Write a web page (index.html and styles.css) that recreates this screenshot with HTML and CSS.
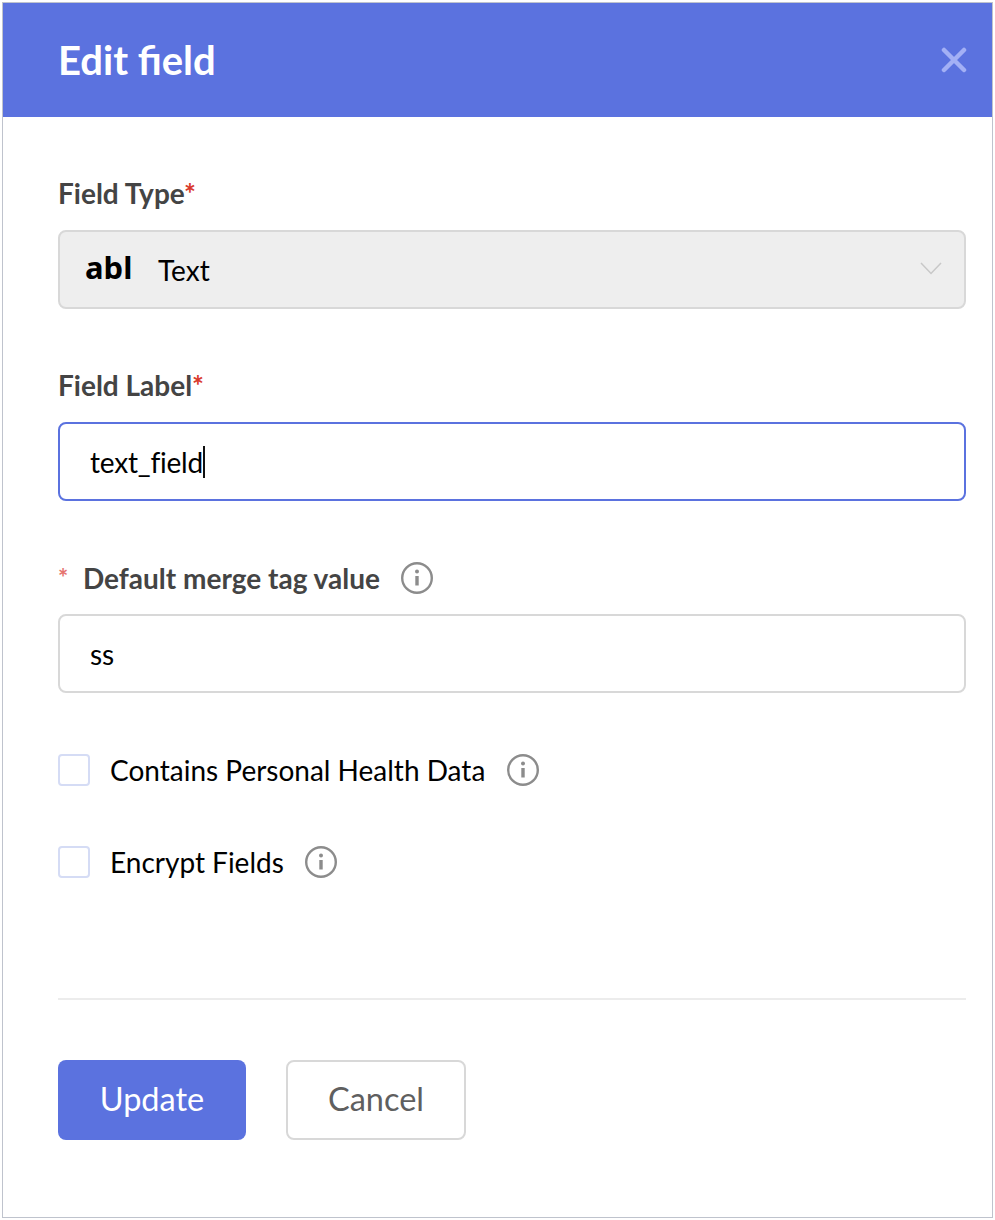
FILE: index.html
```html
<!DOCTYPE html>
<html lang="en">
<head>
    <meta charset="UTF-8">
    <title>Edit field</title>
    <link rel="stylesheet" href="styles.css">
</head>
<body>
    <div class="dialog">
        <div class="dialog-header">
            <h1>Edit field</h1>
            <svg class="close-icon" width="26" height="26" viewBox="0 0 26 26"><path d="M3 3 L23 23 M23 3 L3 23"/></svg>
        </div>
        <div class="dialog-body">
            <label class="field-label">Field Type<span class="req">*</span></label>
            <div class="field-box select-box">
                <span class="type-icon">abl</span>
                <span class="type-name">Text</span>
                <svg class="chevron" width="22" height="13" viewBox="0 0 22 13"><path d="M1 1 L11 11.5 L21 1"/></svg>
            </div>

            <label class="field-label label-gap">Field Label<span class="req">*</span></label>
            <div class="field-box field-focus"><span class="typed">text_field</span><span class="caret"></span></div>

            <div class="field-label label-gap label-row">
                <span class="req-left">*</span>
                <span>Default merge tag value</span>
                <svg class="info-icon info-label" width="32" height="32" viewBox="0 0 32 32"><circle cx="16" cy="16" r="14.8"/><circle class="dot" cx="16" cy="9.6" r="2"/><path d="M16 14 V23.5"/></svg>
            </div>
            <div class="field-box">ss</div>

            <div class="check-row first-check">
                <span class="checkbox"></span>
                <span>Contains Personal Health Data</span>
                <svg class="info-icon" width="32" height="32" viewBox="0 0 32 32"><circle cx="16" cy="16" r="14.8"/><circle class="dot" cx="16" cy="9.6" r="2"/><path d="M16 14 V23.5"/></svg>
            </div>
            <div class="check-row">
                <span class="checkbox"></span>
                <span>Encrypt Fields</span>
                <svg class="info-icon info-short" width="32" height="32" viewBox="0 0 32 32"><circle cx="16" cy="16" r="14.8"/><circle class="dot" cx="16" cy="9.6" r="2"/><path d="M16 14 V23.5"/></svg>
            </div>

            <div class="divider"></div>

            <div class="button-row">
                <button class="btn btn-primary">Update</button>
                <button class="btn btn-cancel">Cancel</button>
            </div>
        </div>
    </div>
</body>
</html>
```

FILE: styles.css
```css
body {
    margin: 0;
    background-color: #fff;
    font-family: Lato, "Liberation Sans", sans-serif;
}
.dialog {
    margin: 2px;
    width: 991px;
    height: 1216px;
    box-sizing: border-box;
    border: 1px solid #bfc3cd;
    background-color: #fff;
}
.dialog-header {
    height: 114px;
    background-color: #5b72df;
    display: flex;
    align-items: center;
    justify-content: space-between;
    padding: 0 25px 0 55px;
}
.dialog-header h1 {
    margin: 0;
    color: #fff;
    font-size: 40px;
    font-weight: 700;
}
.close-icon path {
    fill: none;
    stroke: #a3b0f5;
    stroke-width: 4.5;
    stroke-linecap: round;
}
.dialog-body {
    padding: 59px 26px 0 55px;
}
.field-label {
    display: block;
    height: 36px;
    line-height: 34px;
    margin-bottom: 18px;
    font-size: 28px;
    font-weight: 700;
    color: #444;
}
.label-gap {
    margin-top: 59px;
}
.label-row {
    display: flex;
    align-items: center;
}
.req {
    color: #d9392b;
}
.req-left {
    color: #e5736f;
    width: 25px;
    font-size: 24px;
}
.field-box {
    box-sizing: border-box;
    height: 79px;
    border: 2px solid #d8d8d8;
    border-radius: 8px;
    padding: 0 30px;
    display: flex;
    align-items: center;
    font-size: 28px;
    color: #000;
}
.select-box {
    background-color: #eee;
    padding: 0 22px 0 25px;
}
.type-icon {
    font-family: "Noto Sans", sans-serif;
    font-weight: 700;
    font-size: 31px;
    width: 73px;
    margin-top: -6px;
}
.type-name {
    flex: 1;
}
.chevron path {
    fill: none;
    stroke: #c8c8c8;
    stroke-width: 1.5;
}
.chevron {
    margin-top: -2px;
}
.field-focus {
    border-color: #5b72df;
}
.typed {
    letter-spacing: -0.2px;
}
.caret {
    width: 2px;
    height: 32px;
    background-color: #111;
}
.info-icon circle {
    fill: none;
    stroke: #8c8c8c;
    stroke-width: 2.4;
}
.info-icon circle.dot {
    fill: #8c8c8c;
    stroke: none;
}
.info-icon path {
    fill: none;
    stroke: #8c8c8c;
    stroke-width: 3.4;
}
.info-icon {
    margin-left: 22px;
}
.info-label {
    margin-left: 21px;
}
.info-short {
    margin-left: 21px;
}
.check-row {
    display: flex;
    align-items: center;
    height: 32px;
    margin-top: 60px;
    font-size: 28px;
    color: #000;
}
.first-check {
    margin-top: 61px;
}
.checkbox {
    box-sizing: border-box;
    width: 32px;
    height: 32px;
    border: 2px solid #d5dcf5;
    border-radius: 4px;
    margin-right: 20px;
}
.divider {
    height: 2px;
    background-color: #ececec;
    margin-top: 120px;
}
.button-row {
    display: flex;
    gap: 40px;
    margin-top: 60px;
}
.btn {
    box-sizing: border-box;
    height: 80px;
    border-radius: 8px;
    font-family: Lato, "Liberation Sans", sans-serif;
    font-size: 32.5px;
    line-height: 1;
    padding: 0 0 2px;
}
.btn-primary {
    width: 188px;
    border: none;
    background-color: #5b72df;
    color: #fff;
}
.btn-cancel {
    width: 180px;
    border: 2px solid #d8d8d8;
    background-color: #fff;
    color: #5f5f5f;
}
```
